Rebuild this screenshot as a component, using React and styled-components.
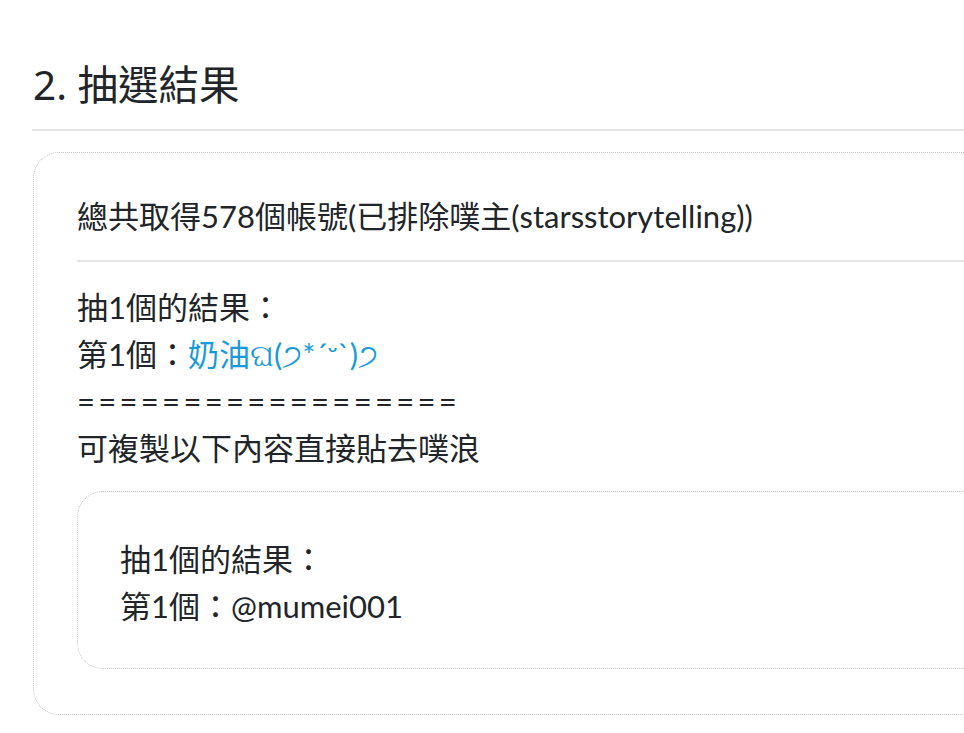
import React from 'react';
import styled, { createGlobalStyle } from 'styled-components';

const GlobalStyle = createGlobalStyle`
  body {
    margin: 0;
    background: #fff;
    overflow: hidden;
    font-family: "Noto Sans", "Noto Sans CJK TC", sans-serif;
    color: #212529;
  }
`;

const Page = styled.div`
  width: 1200px;
  padding: 61px 0 0 32px;
`;

const Heading = styled.h2`
  margin: 0;
  padding-left: 1px;
  font-size: 40.5px;
  font-weight: 400;
  line-height: 48px;
  padding-bottom: 20px;
  border-bottom: 2px solid #e5e5e5;
`;

const Box = styled.div`
  margin-top: 21px;
  margin-left: 1px;
  border: 1px dotted #c4c4c4;
  border-radius: 26px;
  padding: ${(p) => p.$pad};
  font-family: Lato, "Noto Sans CJK TC", sans-serif;
  font-size: 31px;
  line-height: 47px;
`;

const Summary = styled.div`
  padding-bottom: 20px;
  border-bottom: 2px solid #e5e5e5;
  margin-bottom: 22px;
`;

const Line = styled.div``;

const Separator = styled.div`
  letter-spacing: 3.3px;
`;

const Link = styled.a`
  color: #1a9ad9;
  text-decoration: none;
`;

const InnerBox = styled(Box)`
  margin-top: 19px;
  margin-left: 0;
`;

export default function App() {
  return (
    <>
      <GlobalStyle />
      <Page>
        <Heading>2. 抽選結果</Heading>
        <Box $pad="40px 43px 45px">
          <Summary>總共取得578個帳號(已排除噗主(starsstorytelling))</Summary>
          <Line>抽1個的結果：</Line>
          <Line>
            第1個：<Link href="#">奶油ଘ(੭*ˊᵕˋ)੭</Link>
          </Line>
          <Separator>==================</Separator>
          <Line>可複製以下內容直接貼去噗浪</Line>
          <InnerBox $pad="44px 42px 38px">
            <Line>抽1個的結果：</Line>
            <Line>第1個：@mumei001</Line>
          </InnerBox>
        </Box>
      </Page>
    </>
  );
}
